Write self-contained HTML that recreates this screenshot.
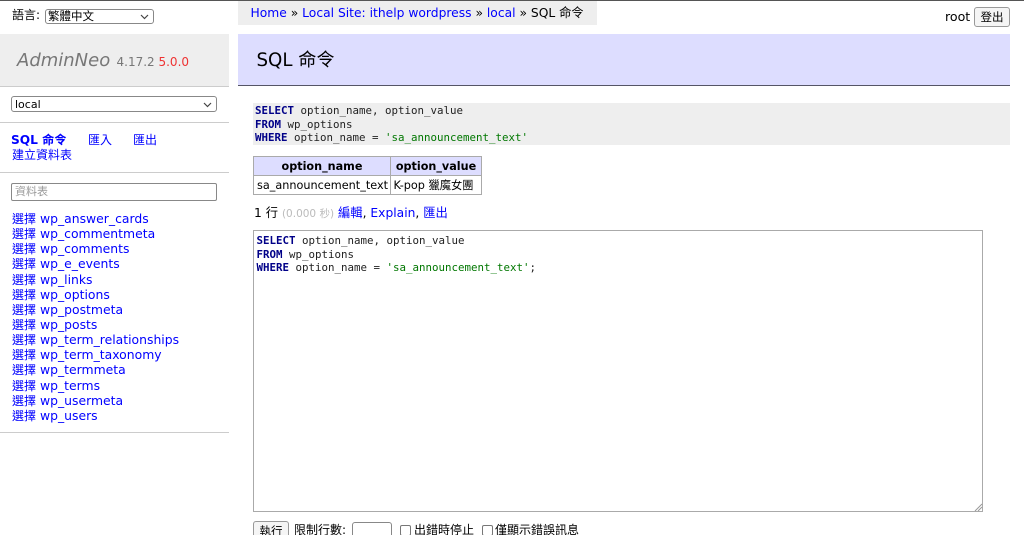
<!DOCTYPE html>
<html lang="zh-Hant"><head><meta charset="utf-8"><title>SQL 命令</title>
<style>
html,body{margin:0;padding:0;width:1024px;height:535px;overflow:hidden;background:#fff}
body{position:relative;font:13px/15px "DejaVu Sans","Noto Sans CJK TC",sans-serif;color:#000}
a{color:#00f;text-decoration:none}
.a{position:absolute;white-space:nowrap}
.m{font:10.8px/13.5px "DejaVu Sans Mono","Noto Sans CJK TC",monospace;color:#222}
.m b{color:#008;font-weight:bold}.m i{color:#070;font-style:normal}
.line{position:absolute;left:0;width:229px;height:1px;background:#ccc}
.sel{position:absolute;box-sizing:border-box;border:1px solid #888;border-radius:3px;background:#fff;font-size:11px;line-height:14px;padding-left:3px;color:#000}
.sel svg{position:absolute;right:4px;top:4px}
.c{font-size:12px}
.list a{display:block;height:15.15px}
</style></head><body>
<div class="a" style="left:0;top:0;width:1024px;height:1px;background:#555"></div>

<div class="a" style="left:12px;top:8px;font-size:12px">語言:</div>
<div class="sel" style="left:45px;top:9px;width:109px;height:15px;line-height:13px;padding-left:2px;font-size:11.5px">繁體中文<svg width="9" height="6" viewBox="0 0 9 6"><path d="M1 1l3.5 3.5L8 1" fill="none" stroke="#444" stroke-width="1.2"/></svg></div>

<div class="a" style="left:0;top:34px;width:229px;height:52px;background:#eee;border-bottom:1px solid #ccc"></div>
<div class="a" style="left:17px;top:49px;font-size:18px;line-height:24px;font-style:italic;color:#777">AdminNeo</div>
<div class="a" style="left:116.5px;top:55px;font-size:12px;color:#777">4.17.2 <span style="color:#e33">5.0.0</span></div>

<div class="sel" style="left:11px;top:96px;width:206px;height:16px;line-height:15px">local<svg width="9" height="6" viewBox="0 0 9 6" style="top:5px"><path d="M1 1l3.5 3.5L8 1" fill="none" stroke="#444" stroke-width="1.2"/></svg></div>
<div class="line" style="top:122px"></div>

<a class="a" href="#" style="left:11px;top:133px;font-size:12.2px;font-weight:bold">SQL 命令</a>
<a class="a" href="#" style="left:88px;top:133px;font-size:12px">匯入</a>
<a class="a" href="#" style="left:133px;top:133px;font-size:12px">匯出</a>
<a class="a" href="#" style="left:12px;top:148px;font-size:12px">建立資料表</a>
<div class="line" style="top:172px"></div>

<div class="a" style="left:11px;top:183px;width:206px;height:18px;box-sizing:border-box;border:1px solid #888;border-radius:2px;font-size:11px;line-height:16px;padding-left:3px;color:#999">資料表</div>

<div class="a list" style="left:12px;top:211px;font-size:12.4px;line-height:15px">
<a href="#"><span class="c">選擇</span> wp_answer_cards</a>
<a href="#"><span class="c">選擇</span> wp_commentmeta</a>
<a href="#"><span class="c">選擇</span> wp_comments</a>
<a href="#"><span class="c">選擇</span> wp_e_events</a>
<a href="#"><span class="c">選擇</span> wp_links</a>
<a href="#"><span class="c">選擇</span> wp_options</a>
<a href="#"><span class="c">選擇</span> wp_postmeta</a>
<a href="#"><span class="c">選擇</span> wp_posts</a>
<a href="#"><span class="c">選擇</span> wp_term_relationships</a>
<a href="#"><span class="c">選擇</span> wp_term_taxonomy</a>
<a href="#"><span class="c">選擇</span> wp_termmeta</a>
<a href="#"><span class="c">選擇</span> wp_terms</a>
<a href="#"><span class="c">選擇</span> wp_usermeta</a>
<a href="#"><span class="c">選擇</span> wp_users</a>
</div>
<div class="line" style="top:432px"></div>

<div class="a" style="left:238px;top:1px;width:359px;height:24px;background:#eee"></div>
<div class="a" style="left:250.5px;top:6px;font-size:12.3px"><a href="#">Home</a> » <a href="#">Local Site: ithelp wordpress</a> » <a href="#">local</a> » SQL 命令</div>

<div class="a" style="left:945px;top:9px;font-size:12.6px">root</div>
<div class="a" style="left:974px;top:7px;width:36px;height:20px;box-sizing:border-box;border:1px solid #999;border-radius:3px;background:#f5f5f5;font-size:11.5px;line-height:18px;text-align:center">登出</div>

<div class="a" style="left:238px;top:34px;width:772px;height:51px;background:#ddf"></div>
<div class="a" style="left:238px;top:85px;width:772px;height:1px;background:#556"></div>
<div class="a" style="left:256.5px;top:49px;font-size:18.2px;line-height:24px">SQL 命令</div>

<div class="a" style="left:253px;top:103px;width:757px;height:42px;background:#eee"></div>
<div class="a m" style="left:255px;top:104px"><b>SELECT</b> option_name, option_value<br><b>FROM</b> wp_options<br><b>WHERE</b> option_name = <i>'sa_announcement_text'</i></div>

<div class="a" style="left:253px;top:156px;width:229px;height:39px;box-sizing:border-box;border:1px solid #aaa"></div>
<div class="a" style="left:254px;top:157px;width:227px;height:19px;background:#ddf"></div>
<div class="a" style="left:254px;top:175px;width:227px;height:1px;background:#aaa"></div>
<div class="a" style="left:390px;top:157px;width:1px;height:37px;background:#aaa"></div>
<div class="a" style="left:254px;top:159px;width:136px;text-align:center;font-size:11.2px;font-weight:bold">option_name</div>
<div class="a" style="left:391px;top:159px;width:90px;text-align:center;font-size:11.2px;font-weight:bold">option_value</div>
<div class="a" style="left:257px;top:178px;font-size:11.25px">sa_announcement_text</div>
<div class="a" style="left:393.5px;top:178px;font-size:11.25px">K-pop 獵魔女團</div>

<div class="a" style="left:254px;top:206px;font-size:12.3px">1 行 <span style="color:#bbb;font-size:10.5px">(0.000 秒)</span> <a href="#">編輯</a>, <a href="#">Explain</a>, <a href="#">匯出</a></div>

<div class="a" style="left:253px;top:230px;width:730px;height:282px;box-sizing:border-box;border:1px solid #aaa"></div>
<div class="a m" style="left:256.5px;top:234px"><b>SELECT</b> option_name, option_value<br><b>FROM</b> wp_options<br><b>WHERE</b> option_name = <i>'sa_announcement_text'</i>;</div>
<svg class="a" style="left:974px;top:503px" width="9" height="9" viewBox="0 0 9 9"><path d="M1 8L8 1M4 8L8 4" stroke="#999" fill="none"/></svg>

<div class="a" style="left:253px;top:521px;width:36px;height:22px;box-sizing:border-box;border:1px solid #999;border-radius:3px;background:#f5f5f5;font-size:11.5px;line-height:18px;text-align:center">執行</div>
<div class="a" style="left:294px;top:523px;font-size:12px">限制行數:</div>
<div class="a" style="left:352px;top:522px;width:40px;height:22px;box-sizing:border-box;border:1px solid #888;border-radius:3px"></div>
<div class="a" style="left:400px;top:525px;width:11px;height:11px;box-sizing:border-box;border:1px solid #777;border-radius:2px"></div>
<div class="a" style="left:414px;top:523px;font-size:12px">出錯時停止</div>
<div class="a" style="left:482px;top:525px;width:11px;height:11px;box-sizing:border-box;border:1px solid #777;border-radius:2px"></div>
<div class="a" style="left:495px;top:523px;font-size:12px">僅顯示錯誤訊息</div>
</body></html>
